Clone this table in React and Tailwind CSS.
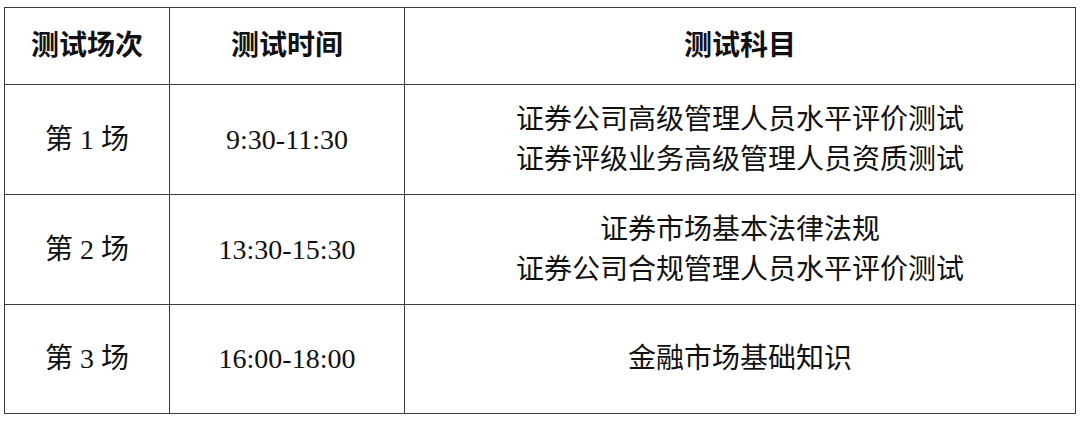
import React from 'react';

const rows = [
  { n: '第 1 场', time: '9:30-11:30', subjects: ['证券公司高级管理人员水平评价测试', '证券评级业务高级管理人员资质测试'] },
  { n: '第 2 场', time: '13:30-15:30', subjects: ['证券市场基本法律法规', '证券公司合规管理人员水平评价测试'] },
  { n: '第 3 场', time: '16:00-18:00', subjects: ['金融市场基础知识'] },
];

const font = { fontFamily: '"Liberation Serif", "Noto Sans CJK SC", serif' };

export default function App() {
  return (
    <div className="w-[1080px] h-[421px] bg-white pt-[7px] pl-[4px]" style={font}>
      <table className="border-collapse text-[28px] text-[#111] leading-[40px]">
        <thead>
          <tr className="h-[77px]">
            <th className="w-[165px] border border-[#3c3c3c] font-semibold text-center align-middle">测试场次</th>
            <th className="w-[235px] border border-[#3c3c3c] font-semibold text-center align-middle">测试时间</th>
            <th className="w-[671px] border border-[#3c3c3c] font-semibold text-center align-middle">测试科目</th>
          </tr>
        </thead>
        <tbody>
          {rows.map((r, i) => (
            <tr key={r.n} className={i === 2 ? 'h-[109px]' : 'h-[110px]'}>
              <td className="border border-[#3c3c3c] text-center align-middle">{r.n}</td>
              <td className="border border-[#3c3c3c] text-center align-middle">{r.time}</td>
              <td className="border border-[#3c3c3c] text-center align-middle">
                {r.subjects.map((s) => (
                  <div key={s}>{s}</div>
                ))}
              </td>
            </tr>
          ))}
        </tbody>
      </table>
    </div>
  );
}
